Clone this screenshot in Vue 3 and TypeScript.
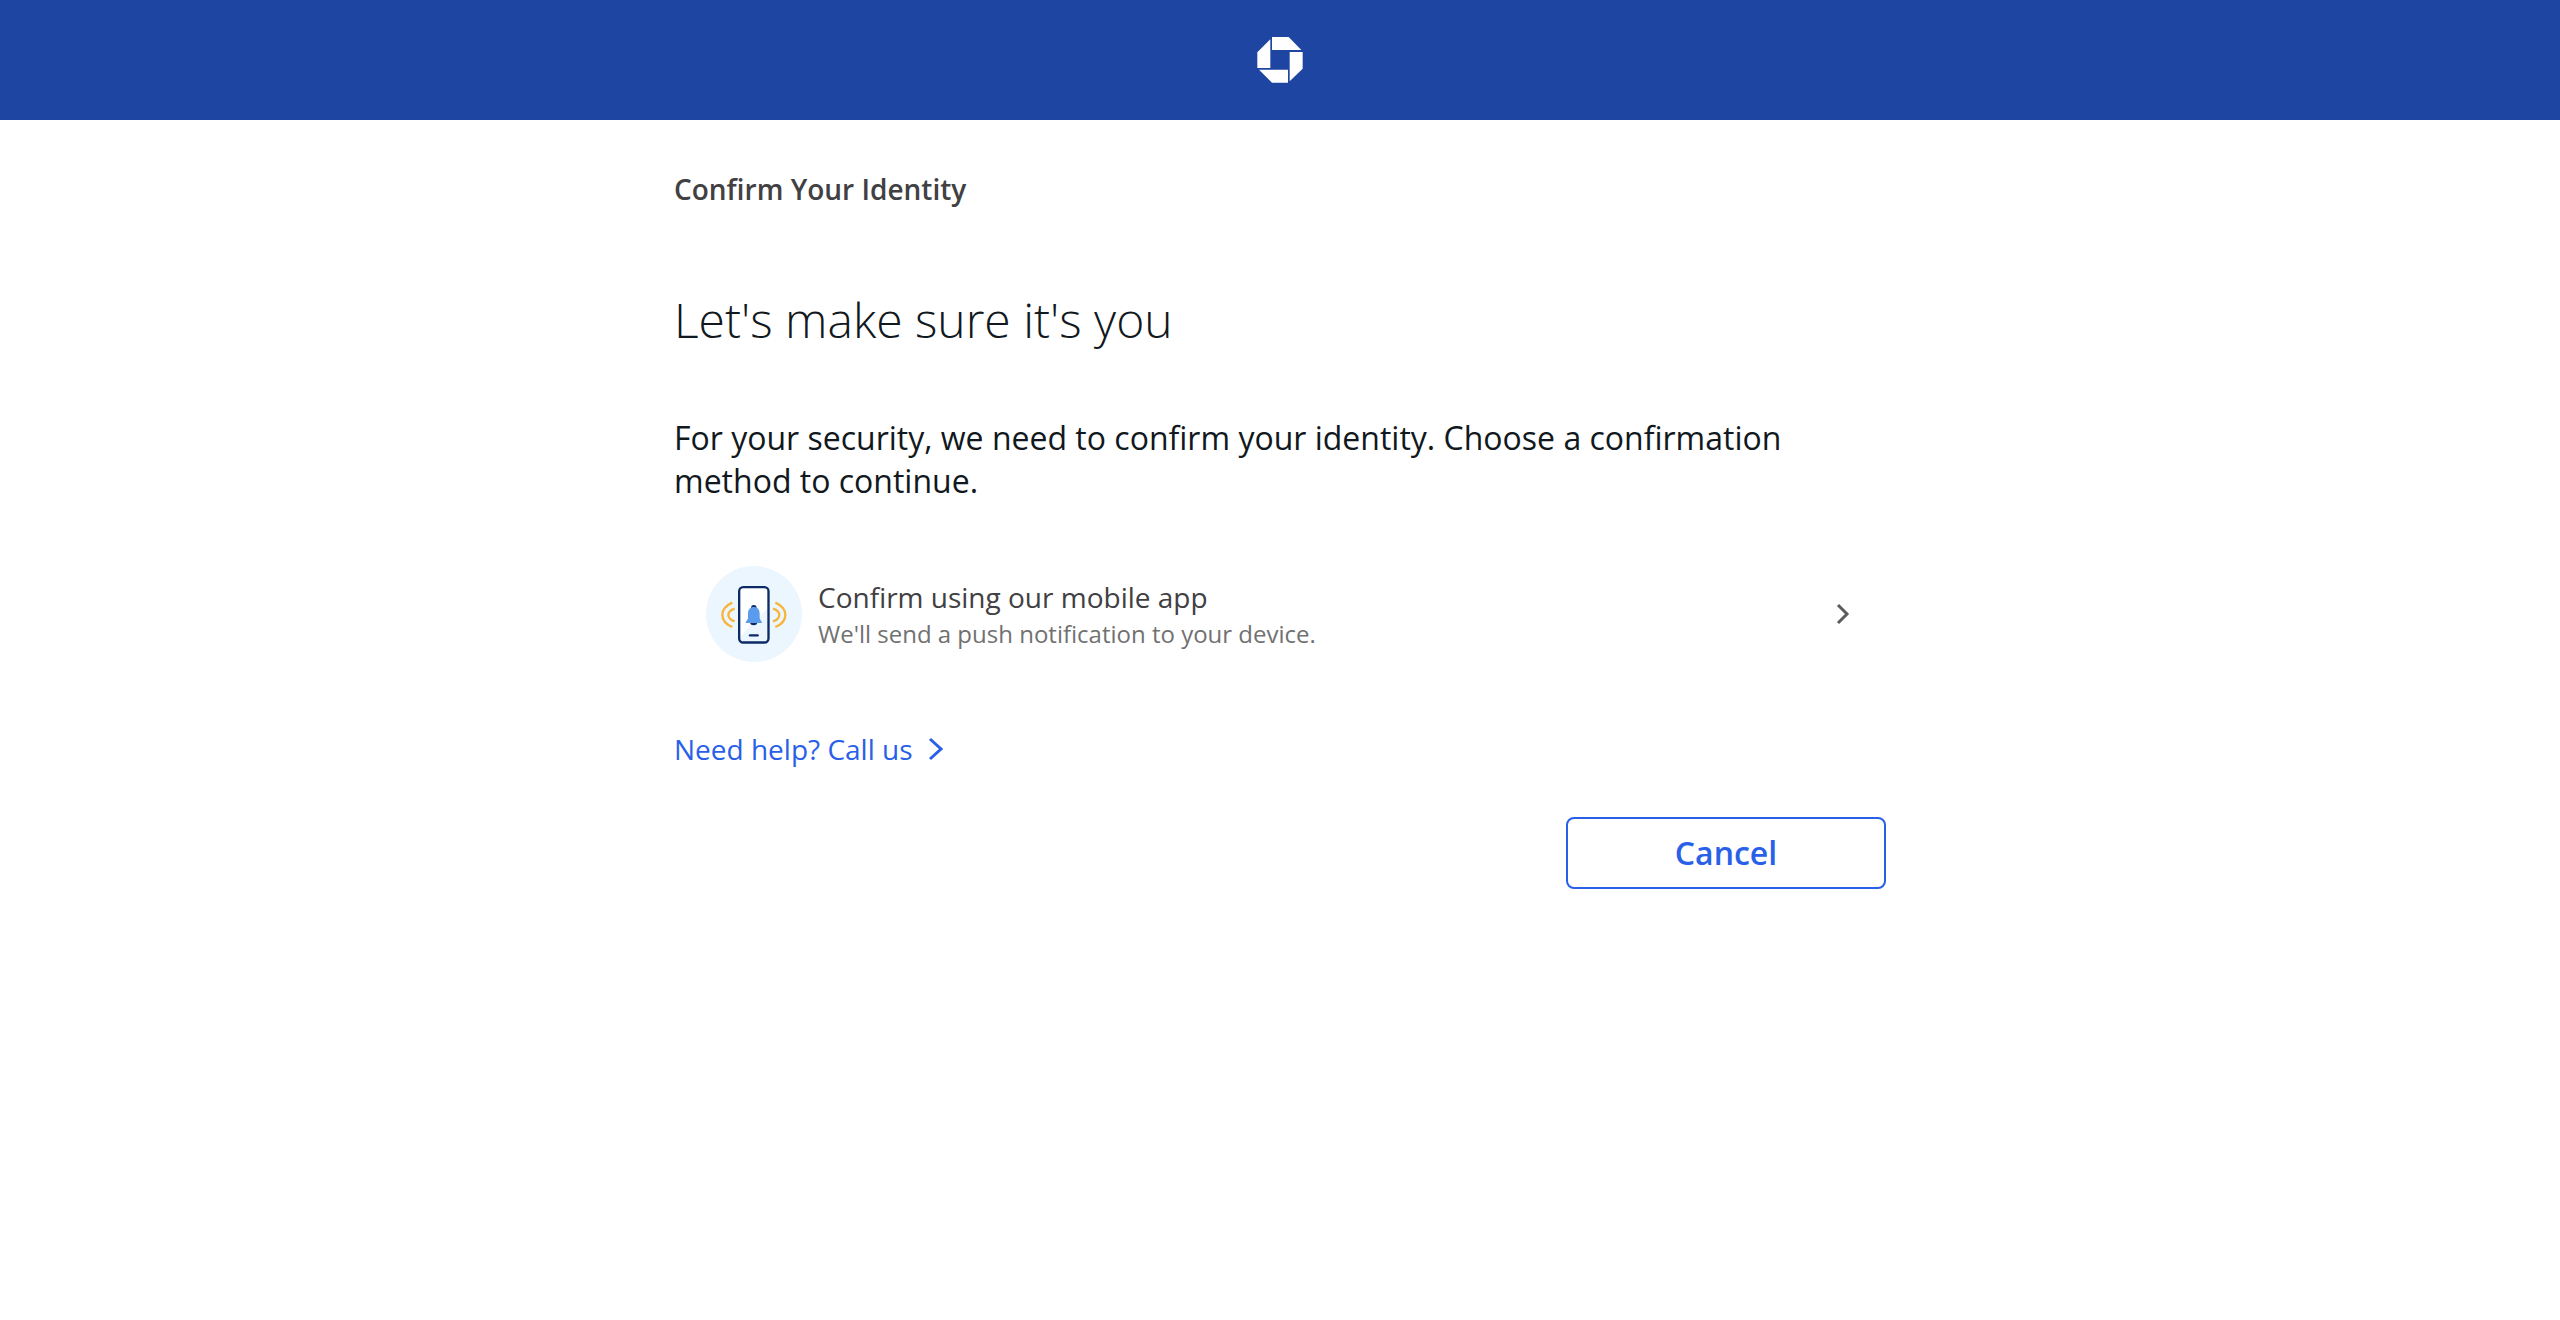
<script setup lang="ts">
interface Method {
  id: string
  title: string
  detail: string
}

const methods: Method[] = [
  {
    id: 'push',
    title: 'Confirm using our mobile app',
    detail: "We'll send a push notification to your device.",
  },
]
</script>

<template>
  <div class="page">
    <header class="masthead">
      <svg class="logo" viewBox="82 51 138 138" role="img" aria-label="Chase">
        <path d="M127 51H177L215 90H127Z" />
        <path d="M180 96H219V146L180 184Z" />
        <path d="M175 188H127L88 149H175Z" />
        <path d="M83 144V97L122 58V144Z" />
      </svg>
    </header>

    <main class="content">
      <p class="eyebrow">Confirm Your Identity</p>
      <h1 class="heading">Let's make sure it's you</h1>
      <p class="intro">
        For your security, we need to confirm your identity. Choose a confirmation method to
        continue.
      </p>

      <ul class="methods">
        <li v-for="method in methods" :key="method.id">
          <button type="button" class="method">
            <svg class="method-icon" viewBox="18 18 288 288" aria-hidden="true">
              <circle cx="162" cy="162" r="144" fill="#ebf6ff" />
              <rect x="117" y="81" width="88" height="166" rx="11" fill="#fff" />
              <path d="M205 142V236a11 11 0 0 1-11 11H128a11 11 0 0 1-11-11V234Z" fill="#ebf6ff" />
              <rect x="117.500" y="81.500" width="88" height="166" rx="12" fill="none" stroke="#0b2a66" stroke-width="7" />
              <path d="M153 145a8.500 10 0 0 1 17 0ZM150 186H172a11 10 0 0 1-22 0Z" fill="#0b2a66" />
              <path d="M144 161C144 148 151 141 161.500 141S179 148 179 161V174C179 180 186 183 186 189H137C137 183 144 180 144 174Z" fill="#5b9bee" />
              <path d="M150 226H173" stroke="#0b2a66" stroke-width="7" stroke-linecap="round" />
              <g fill="none" stroke="#f7b53c" stroke-width="7">
                <path d="M97 128C57 146 57 184 97 201" />
                <path d="M104 146C79 154 79 176 104 184" />
                <path d="M226 128C266 146 266 184 226 201" />
                <path d="M219 146C244 154 244 176 219 184" />
              </g>
            </svg>
            <span class="method-text">
              <span class="method-title">{{ method.title }}</span>
              <span class="method-detail">{{ method.detail }}</span>
            </span>
            <svg class="method-chevron" viewBox="0 0 12 22" aria-hidden="true">
              <path d="M2 2L11 11L2 20" />
            </svg>
          </button>
        </li>
      </ul>

      <a href="#help" class="help">
        Need help? Call us
        <svg class="help-chevron" viewBox="0 0 14 24" aria-hidden="true">
          <path d="M1 2L12 12L1 22" />
        </svg>
      </a>

      <div class="actions">
        <button type="button" class="cancel">Cancel</button>
      </div>
    </main>
  </div>
</template>

<style>
body {
  margin: 0;
  background: #fff;
}
</style>

<style scoped>
.page {
  min-height: 100vh;
  font-family: 'Open Sans', 'Noto Sans', sans-serif;
  color: #111820;
}

.masthead {
  display: flex;
  align-items: center;
  justify-content: center;
  height: 120px;
  background: #1e45a1;
}

.logo {
  width: 46px;
  height: 46px;
  fill: #fff;
}

.content {
  box-sizing: border-box;
  width: 90%;
  max-width: 1212px;
  margin: 0 auto;
  padding: 49px 0 64px;
}

.eyebrow {
  margin: 0;
  color: #414042;
  font-size: 28px;
  font-weight: 600;
  line-height: 40px;
}

.heading {
  margin: 79px 0 64px;
  font-size: 48px;
  font-weight: 300;
  line-height: 64px;
}

.intro {
  margin: 0;
  font-size: 32px;
  line-height: 43px;
}

.methods {
  margin: 64px 0 67px;
  padding: 0;
  list-style: none;
}

.method {
  display: flex;
  align-items: center;
  gap: 16px;
  width: 100%;
  padding: 0 38px 0 32px;
  border: 0;
  background: none;
  font: inherit;
  text-align: left;
  cursor: pointer;
}

.method-icon {
  flex: none;
  width: 96px;
  height: 96px;
}

.method-text {
  display: flex;
  flex: 1;
  flex-direction: column;
}

.method-title {
  color: #414042;
  font-size: 28px;
  line-height: 40px;
}

.method-detail {
  color: #717171;
  font-size: 24px;
  line-height: 34px;
}

.method-chevron,
.help-chevron {
  flex: none;
  overflow: visible;
  fill: none;
  stroke-width: 3;
}

.method-chevron {
  width: 12px;
  height: 22px;
  stroke: #5c5c5e;
}

.help {
  display: inline-flex;
  align-items: center;
  gap: 16px;
  color: #2860e8;
  font-size: 28px;
  line-height: 40px;
  text-decoration: none;
  vertical-align: top;
}

.help-chevron {
  width: 14px;
  height: 24px;
  stroke: #2860e8;
}

.actions {
  display: flex;
  justify-content: flex-end;
  margin-top: 48px;
}

.cancel {
  width: 320px;
  height: 72px;
  padding: 0 0 2px;
  border: 2px solid #2860e8;
  border-radius: 8px;
  background: #fff;
  color: #2860e8;
  font-family: inherit;
  font-size: 32px;
  font-weight: 600;
  cursor: pointer;
}
</style>
